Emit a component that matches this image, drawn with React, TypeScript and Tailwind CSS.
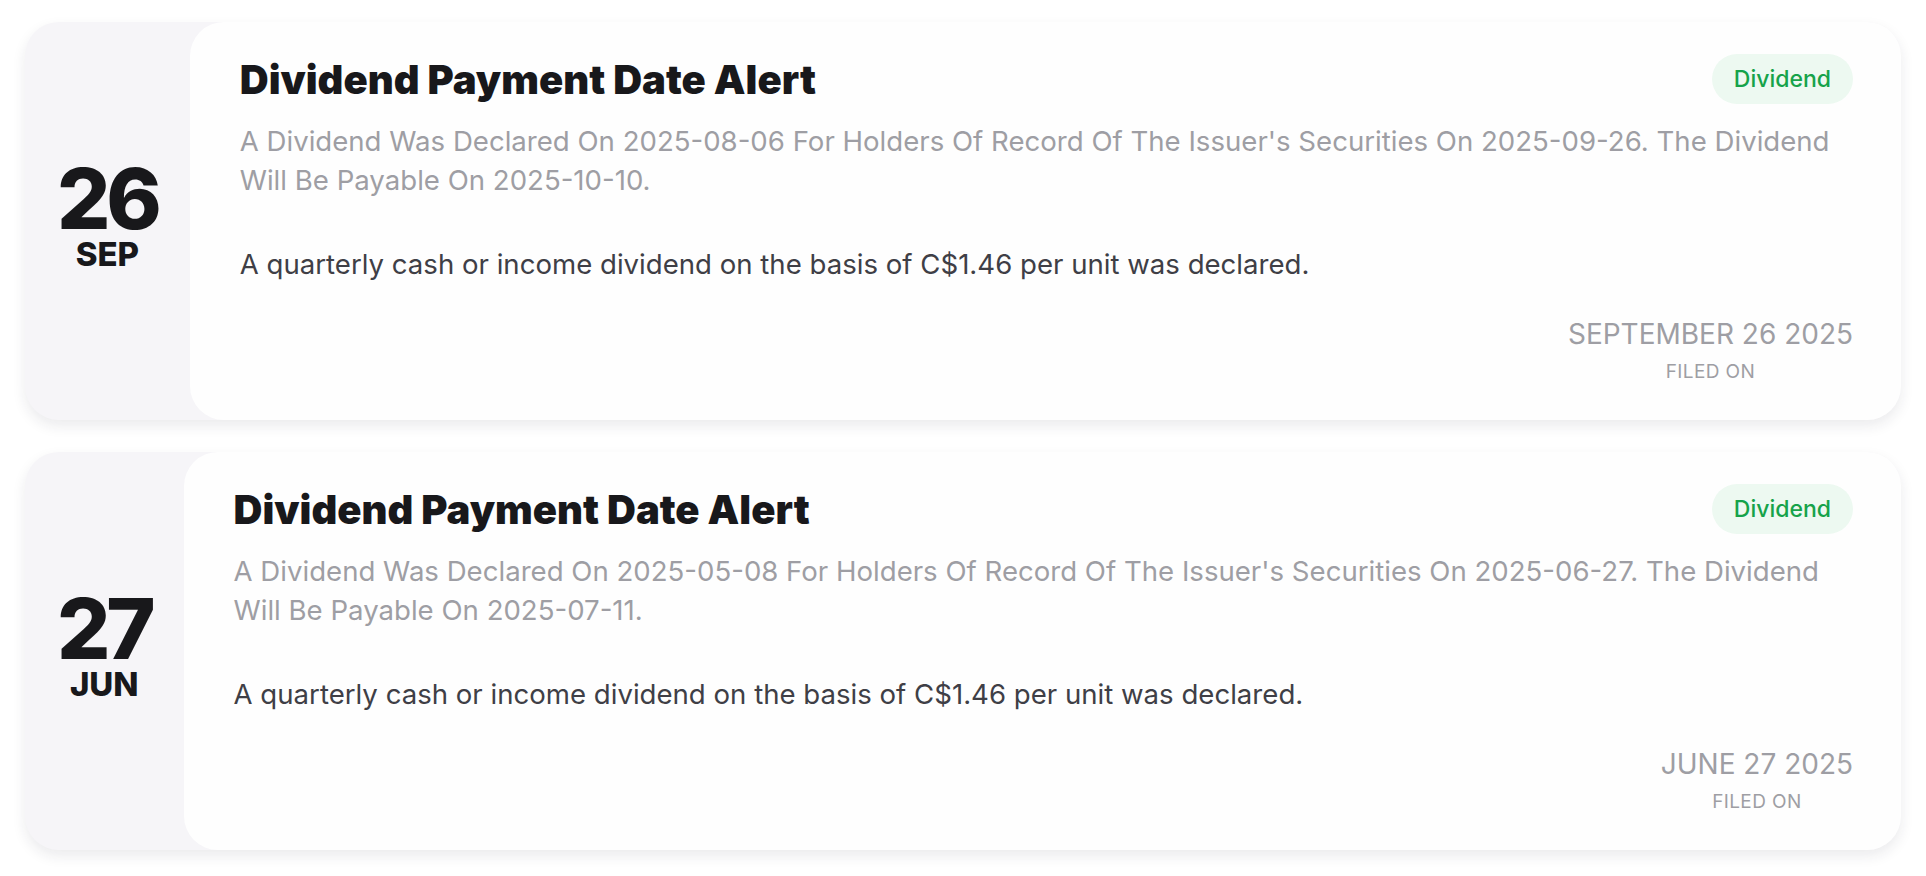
import React from 'react';

interface Alert {
  day: string;
  month: string;
  title: string;
  summary: string;
  body: string;
  filedOn: string;
}

const alerts: Alert[] = [
  {
    day: '26',
    month: 'SEP',
    title: 'Dividend Payment Date Alert',
    summary:
      "A Dividend Was Declared On 2025-08-06 For Holders Of Record Of The Issuer's Securities On 2025-09-26. The Dividend Will Be Payable On 2025-10-10.",
    body: 'A quarterly cash or income dividend on the basis of C$1.46 per unit was declared.',
    filedOn: 'SEPTEMBER 26 2025'
  },
  {
    day: '27',
    month: 'JUN',
    title: 'Dividend Payment Date Alert',
    summary:
      "A Dividend Was Declared On 2025-05-08 For Holders Of Record Of The Issuer's Securities On 2025-06-27. The Dividend Will Be Payable On 2025-07-11.",
    body: 'A quarterly cash or income dividend on the basis of C$1.46 per unit was declared.',
    filedOn: 'JUNE 27 2025'
  }
];

function AlertCard({ alert }: { alert: Alert }) {
  return (
    <div className="flex rounded-[34px] bg-[#f6f5f8] shadow-[0_6px_14px_rgba(30,30,50,0.09)]">
      <div className="flex flex-col items-center justify-center px-[32px] pb-[10px] text-[#18181b]">
        <span className="text-[84px] font-extrabold leading-[64px] tracking-[-0.05em]">{alert.day}</span>
        <span className="mt-[11px] text-[33px] font-extrabold leading-[24px]">{alert.month}</span>
      </div>
      <div className="flex-1 rounded-[34px] bg-[#fefefe] pl-[50px] pr-[48px] pt-[32px] pb-[36px]">
        <div className="flex items-center justify-between">
          <h2 className="text-[40px] font-black leading-[45px] text-[#18181b]">{alert.title}</h2>
          <span className="flex h-[50px] items-center rounded-full bg-[#edf9f1] px-[22px] text-[23px] font-medium text-[#16a34a]">
            Dividend
          </span>
        </div>
        <p className="mt-[18px] text-[27.6px] leading-[39px] text-[#9e9ea4]">{alert.summary}</p>
        <p className="mt-[45px] text-[27.6px] leading-[39px] text-[#3f3f46]">{alert.body}</p>
        <div className="mt-[31px] flex justify-end">
          <div className="flex flex-col items-center">
            <span className="text-[28px] leading-[39px] text-[#9e9ea4]">{alert.filedOn}</span>
            <span className="mt-[6px] text-[19px] leading-[24px] tracking-[0.02em] text-[#9e9ea4]">FILED ON</span>
          </div>
        </div>
      </div>
    </div>
  );
}

export default function App() {
  return (
    <div className="min-h-screen bg-white px-[25px] pt-[22px] font-['Inter',sans-serif]">
      <div className="flex flex-col gap-[32px]">
        {alerts.map((alert, i) => (
          <AlertCard key={i} alert={alert} />
        ))}
      </div>
    </div>
  );
}
